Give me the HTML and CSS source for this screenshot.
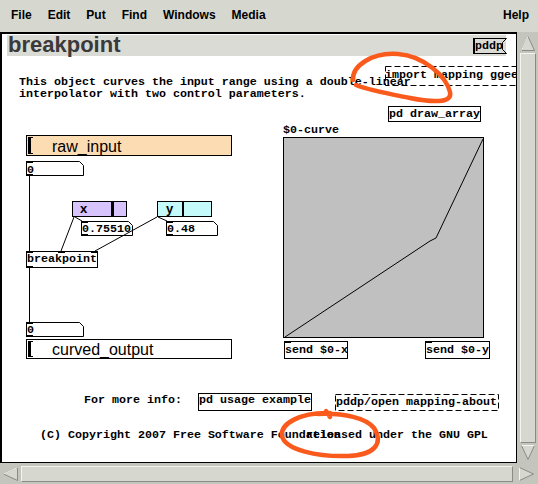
FILE: index.html
```html
<!DOCTYPE html>
<html>
<head>
<meta charset="utf-8">
<link rel="stylesheet" href="styles.css">
</head>
<body>
<div class="menubar">
  <span class="item">File</span>
  <span class="item">Edit</span>
  <span class="item">Put</span>
  <span class="item">Find</span>
  <span class="item">Windows</span>
  <span class="item">Media</span>
  <span class="item help">Help</span>
</div>
<div class="main">
  <div class="canvas">
    <div class="band"><span class="title">breakpoint</span></div>
    <svg class="layer" width="516" height="430" viewBox="0 0 516 430">
      <!-- graph -->
      <rect x="283.5" y="105.5" width="200" height="200" fill="#c0c0c0" stroke="#000"/>
      <polyline points="285,305 430,209 436,206 483,107" fill="none" stroke="#000"/>
      <!-- message box pddp -->
      <polygon points="473.5,6.5 506.5,6.5 502.5,10.5 502.5,17.5 506.5,21.5 473.5,21.5" fill="none" stroke="#000"/>
      <rect x="473" y="6" width="2" height="16" fill="#000"/>
      <!-- dashed boxes -->
      <rect x="385.5" y="34.5" width="150" height="19" fill="none" stroke="#000" stroke-dasharray="6 3"/>
      <rect x="335.5" y="362.5" width="163" height="16" fill="none" stroke="#000" stroke-dasharray="6 3"/>
      <!-- object boxes -->
      <rect x="388.5" y="74.5" width="92" height="15" fill="#fff" stroke="#000"/>
      <rect x="284.5" y="309.5" width="63" height="17" fill="#fff" stroke="#000"/>
      <rect x="425.5" y="309.5" width="64" height="17" fill="#fff" stroke="#000"/>
      <rect x="26.5" y="219.5" width="71" height="16" fill="#fff" stroke="#000"/>
      <rect x="198.5" y="361.5" width="113" height="17" fill="#fff" stroke="#000"/>
      <!-- number boxes -->
      <polygon points="26.5,129.5 79.5,129.5 83.5,133.5 83.5,143.5 26.5,143.5" fill="#fff" stroke="#000"/>
      <polygon points="81.5,189.5 128.5,189.5 132.5,193.5 132.5,203.5 81.5,203.5" fill="#fff" stroke="#000"/>
      <polygon points="166.5,189.5 213.5,189.5 217.5,193.5 217.5,203.5 166.5,203.5" fill="#fff" stroke="#000"/>
      <polygon points="26.5,290.5 79.5,290.5 83.5,294.5 83.5,304.5 26.5,304.5" fill="#fff" stroke="#000"/>
      <!-- wires -->
      <g stroke="#000" stroke-width="1" fill="none">
        <line x1="29.5" y1="144" x2="29.5" y2="219"/>
        <line x1="29.5" y1="236" x2="29.5" y2="290"/>
        <line x1="74" y1="185" x2="61" y2="219"/>
        <line x1="75" y1="185" x2="82" y2="189"/>
        <line x1="157" y1="185" x2="95" y2="219"/>
        <line x1="158" y1="185" x2="167" y2="189"/>
      </g>
      <!-- iolets -->
      <g fill="#000">
        <rect x="26" y="129" width="7" height="2"/>
        <rect x="26" y="142" width="7" height="2"/>
        <rect x="81" y="189" width="7" height="2"/>
        <rect x="81" y="202" width="7" height="2"/>
        <rect x="166" y="189" width="7" height="2"/>
        <rect x="166" y="202" width="7" height="2"/>
        <rect x="26" y="219" width="7" height="2"/>
        <rect x="58" y="219" width="7" height="2"/>
        <rect x="91" y="219" width="7" height="2"/>
        <rect x="26" y="234" width="7" height="2"/>
        <rect x="26" y="290" width="7" height="2"/>
        <rect x="26" y="303" width="7" height="2"/>
        <rect x="284" y="309" width="7" height="2"/>
        <rect x="425" y="309" width="7" height="2"/>
      </g>
    </svg>

    <div class="iem raw" ><span class="mark"></span><span class="iemlabel">raw_input</span></div>
    <div class="iem out"><span class="mark"></span><span class="iemlabel">curved_output</span></div>

    <div class="hsl sx"><span class="slabel">x</span><span class="knob kx"></span></div>
    <div class="hsl sy"><span class="slabel">y</span><span class="knob ky"></span></div>

    <span class="t t-pddp">pddp</span>
    <span class="t t-import">import mapping ggee</span>
    <div class="desc">This object curves the input range using a double-linear<br>interpolator with two control parameters.</div>
    <span class="t t-draw">pd draw_array</span>
    <span class="t t-curve">$0-curve</span>
    <span class="t t-sx">send $0-x</span>
    <span class="t t-sy">send $0-y</span>
    <span class="t t-n0">0</span>
    <span class="t t-nx">0.75510</span>
    <span class="t t-ny">0.48</span>
    <span class="t t-bp">breakpoint</span>
    <span class="t t-n1">0</span>
    <span class="t t-info">For more info:</span>
    <span class="t t-usage">pd usage example</span>
    <span class="t t-open">pddp/open mapping-about</span>
    <span class="t t-copy">(C) Copyright 2007 Free Software Foundation</span>
    <span class="t t-gpl">released under the GNU GPL</span>

    <svg class="ink" width="516" height="430" viewBox="0 0 516 430">
      <g fill="none" stroke="#fa5a1e" stroke-width="4.5" stroke-linecap="round" stroke-linejoin="round" filter="url(#soft)">
        <path d="M353,48 C352,34 372,20 398,22 C424,24 446,44 450,60 C453,72 430,70 410,66 C390,62 368,58 356,53"/>
        <path d="M330,381 C300,380 280,392 282,404 C285,418 318,425 348,424 C374,423 384,412 374,396 C366,386 345,381 318,382 M326,379 L330,385"/>
      </g>
      <defs>
        <filter id="soft" x="-10%" y="-10%" width="120%" height="120%"><feGaussianBlur stdDeviation="0.6"/></filter>
      </defs>
    </svg>
  </div>
  <div class="vscroll">
    <svg class="arrow" width="16" height="17" viewBox="0 0 16 17"><polygon points="8,1.5 1.5,15.5 14.5,15.5" fill="#d6d7cf" stroke="#8a8b84"/><line x1="8" y1="1.5" x2="1.5" y2="15.5" stroke="#f4f4f0"/></svg>
    <div class="thumb"></div>
    <svg class="arrow" width="16" height="17" viewBox="0 0 16 17"><polygon points="1.5,1.5 14.5,1.5 8,15.5" fill="#d6d7cf" stroke="#8a8b84"/><line x1="1.5" y1="1.5" x2="14.5" y2="1.5" stroke="#f4f4f0"/></svg>
  </div>
</div>
<div class="hscroll">
  <svg class="harrow" width="17" height="16" viewBox="0 0 17 16"><polygon points="1.5,8 15.5,1.5 15.5,14.5" fill="#d6d7cf" stroke="#8a8b84"/><line x1="1.5" y1="8" x2="15.5" y2="1.5" stroke="#f4f4f0"/></svg>
  <div class="hthumb"></div>
  <svg class="harrow" width="17" height="16" viewBox="0 0 17 16"><polygon points="1.5,1.5 15.5,8 1.5,14.5" fill="#d6d7cf" stroke="#8a8b84"/><line x1="1.5" y1="1.5" x2="1.5" y2="14.5" stroke="#f4f4f0"/></svg>
</div>
</body>
</html>
```
FILE: styles.css
```css
* { box-sizing: border-box; }

body {
  margin: 0;
  width: 538px;
  height: 484px;
  overflow: hidden;
  background: #d6d7cf;
  font-family: "Liberation Sans", Arial, sans-serif;
}

.menubar {
  height: 32px;
  display: flex;
  gap: 16px;
  padding: 8px 9px 0 11px;
  font-size: 12px;
  line-height: 15px;
  font-weight: bold;
  color: #000;
}
.menubar .help { margin-left: auto; }

.main {
  display: flex;
  height: 431px;
}

.canvas {
  position: relative;
  width: 517px;
  height: 431px;
  background: #fff;
  overflow: hidden;
  box-shadow: inset 2px 2px 0 #000, inset -1px -1px 0 #000;
}

.band {
  position: absolute;
  left: 7px;
  top: 3px;
  width: 499px;
  height: 21px;
  background: #dadbd5;
}
.title {
  position: absolute;
  left: 1px;
  top: 1px;
  font-size: 22px;
  line-height: 18px;
  font-weight: bold;
  color: #3a3a3a;
}

.layer, .ink {
  position: absolute;
  left: 0;
  top: 0;
}
.ink { pointer-events: none; }

.iem {
  position: absolute;
  left: 26px;
  width: 206px;
  border: 1px solid #000;
}
.raw { top: 103px; height: 21px; background: #fcdcb2; }
.out { top: 307px; height: 20px; background: #fff; }
.mark {
  position: absolute;
  left: 1px;
  top: 1px;
  bottom: 1px;
  width: 5px;
  border-left: 3px solid #000;
  border-top: 1px solid #000;
  border-bottom: 1px solid #000;
}
.iemlabel {
  position: absolute;
  left: 25px;
  top: 1px;
  font-size: 16px;
  line-height: 19px;
  color: #000;
}
.out .iemlabel { top: 0; }

.hsl {
  position: absolute;
  top: 169px;
  width: 55px;
  height: 16px;
  border: 1px solid #000;
}
.sx { left: 72px; background: #d8c4fc; }
.sy { left: 157px; background: #c4fafa; }
.slabel {
  position: absolute;
  top: 0;
  left: 7px;
  font-size: 13px;
  line-height: 14px;
  font-weight: bold;
  color: #000;
}
.sy .slabel { left: 8px; }
.knob {
  position: absolute;
  top: 0;
  bottom: 0;
  background: #000;
}
.kx { left: 38px; width: 3px; }
.ky { left: 24px; width: 2px; }

.t, .desc {
  position: absolute;
  font-family: "Liberation Mono", "Courier New", monospace;
  font-weight: bold;
  font-size: 11.67px;
  line-height: 15px;
  color: #000;
  white-space: pre;
}
.desc { left: 19px; top: 43.6px; line-height: 12.5px; }
.t-pddp { left: 475px; top: 7px; }
.t-import { left: 385px; top: 36px; }
.t-draw { left: 389px; top: 75px; }
.t-curve { left: 283px; top: 91px; }
.t-sx { left: 285px; top: 311px; }
.t-sy { left: 426px; top: 311px; }
.t-n0 { left: 27px; top: 131px; }
.t-nx { left: 82px; top: 190px; }
.t-ny { left: 167px; top: 190px; }
.t-bp { left: 27px; top: 220px; }
.t-n1 { left: 27px; top: 291px; }
.t-info { left: 84px; top: 361px; }
.t-usage { left: 199px; top: 361px; }
.t-open { left: 336px; top: 363px; }
.t-copy { left: 40px; top: 396px; }
.t-gpl { left: 306px; top: 396px; }

.vscroll {
  width: 21px;
  height: 431px;
  background: #c4c5bd;
  display: flex;
  flex-direction: column;
  gap: 1px;
  padding: 3px 2px 2px 3px;
}
.arrow { flex: none; display: block; }
.thumb {
  flex: 1;
  background: #d6d7cf;
  border: 1px solid;
  border-color: #f4f4f0 #8a8b84 #8a8b84 #f4f4f0;
}

.hscroll {
  height: 21px;
  background: #c4c5bd;
  display: flex;
  gap: 2px;
  padding: 3px 3px 2px 2px;
}
.harrow { flex: none; display: block; }
.hthumb {
  flex: 1;
  margin-right: 3px;
  background: #d6d7cf;
  border: 1px solid;
  border-color: #f4f4f0 #8a8b84 #8a8b84 #f4f4f0;
}
```
